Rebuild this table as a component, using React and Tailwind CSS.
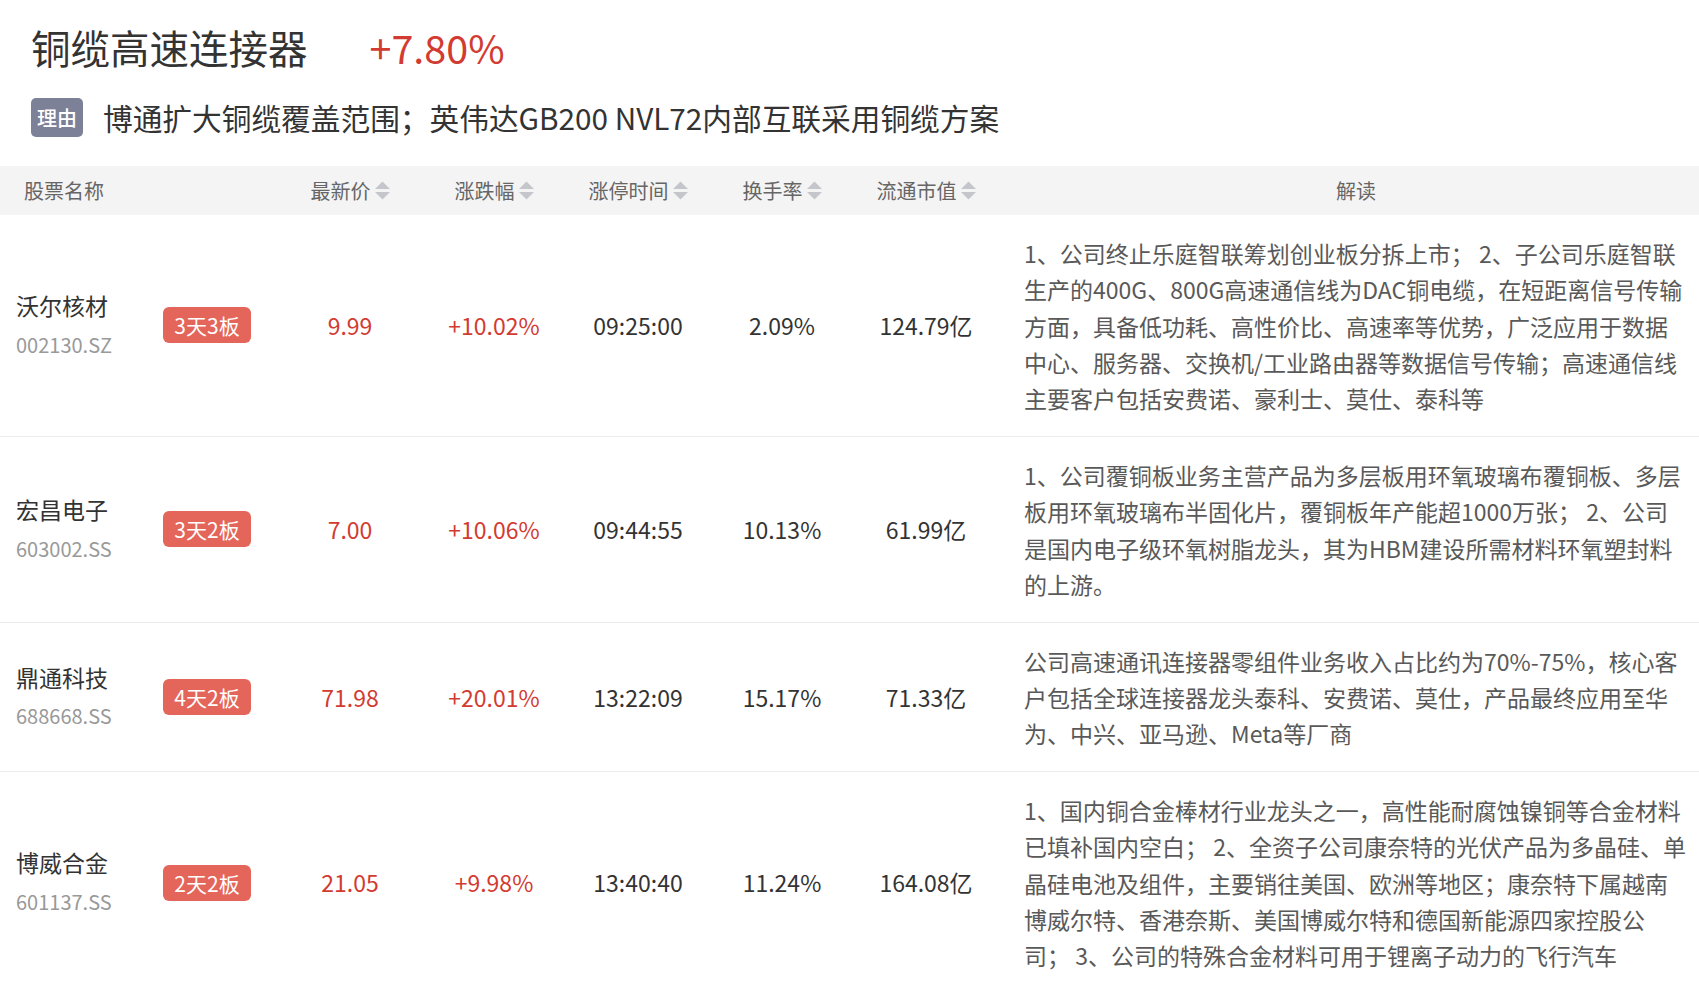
import React from 'react';

const stocks = [
  {
    name: '沃尔核材',
    code: '002130.SZ',
    tag: '3天3板',
    price: '9.99',
    change: '+10.02%',
    time: '09:25:00',
    turnover: '2.09%',
    cap: '124.79亿',
    desc: '1、公司终止乐庭智联筹划创业板分拆上市； 2、子公司乐庭智联生产的400G、800G高速通信线为DAC铜电缆，在短距离信号传输方面，具备低功耗、高性价比、高速率等优势，广泛应用于数据中心、服务器、交换机/工业路由器等数据信号传输；高速通信线主要客户包括安费诺、豪利士、莫仕、泰科等',
  },
  {
    name: '宏昌电子',
    code: '603002.SS',
    tag: '3天2板',
    price: '7.00',
    change: '+10.06%',
    time: '09:44:55',
    turnover: '10.13%',
    cap: '61.99亿',
    desc: '1、公司覆铜板业务主营产品为多层板用环氧玻璃布覆铜板、多层板用环氧玻璃布半固化片，覆铜板年产能超1000万张； 2、公司是国内电子级环氧树脂龙头，其为HBM建设所需材料环氧塑封料的上游。',
  },
  {
    name: '鼎通科技',
    code: '688668.SS',
    tag: '4天2板',
    price: '71.98',
    change: '+20.01%',
    time: '13:22:09',
    turnover: '15.17%',
    cap: '71.33亿',
    desc: '公司高速通讯连接器零组件业务收入占比约为70%-75%，核心客户包括全球连接器龙头泰科、安费诺、莫仕，产品最终应用至华为、中兴、亚马逊、Meta等厂商',
  },
  {
    name: '博威合金',
    code: '601137.SS',
    tag: '2天2板',
    price: '21.05',
    change: '+9.98%',
    time: '13:40:40',
    turnover: '11.24%',
    cap: '164.08亿',
    desc: '1、国内铜合金棒材行业龙头之一，高性能耐腐蚀镍铜等合金材料已填补国内空白； 2、全资子公司康奈特的光伏产品为多晶硅、单晶硅电池及组件，主要销往美国、欧洲等地区；康奈特下属越南博威尔特、香港奈斯、美国博威尔特和德国新能源四家控股公司； 3、公司的特殊合金材料可用于锂离子动力的飞行汽车',
  },
];

// little up/down sort arrows next to header labels
const SortIcon = () => (
  <svg width="15" height="21" viewBox="0 0 15 21" className="ml-[4px] shrink-0">
    <polygon points="0,9 7.5,1.5 15,9" fill="#c4c6cc" />
    <polygon points="0,12 7.5,19.5 15,12" fill="#c4c6cc" />
  </svg>
);

const SortHeader = ({ label }) => (
  <div className="w-[144px] shrink-0 flex items-center justify-center">
    <span>{label}</span>
    <SortIcon />
  </div>
);

const Cell = ({ children, red }) => (
  <div
    className={`w-[144px] shrink-0 flex items-center justify-center ${red ? 'text-[#d23b31]' : 'text-[#333333]'}`}
  >
    {children}
  </div>
);

export default function App() {
  return (
    <div className="w-[1699px] min-h-[985px] bg-white font-['Noto_Sans_CJK_SC',sans-serif] text-[#333333]">
      {/* Title */}
      <div className="px-[31px] pt-[18px] pb-[26px]">
        <div className="flex items-center h-[58px]">
          <h1 className="text-[39.5px] leading-[58px] font-normal text-[#333333]">铜缆高速连接器</h1>
          <span className="ml-[62px] text-[39.5px] leading-[58px] text-[#d23b31]">+7.80%</span>
        </div>
        <div className="mt-[19px] flex items-center h-[45px]">
          <span className="h-[39px] px-[6px] rounded-[5px] bg-[#7c8197] text-white text-[20px] leading-[39px] font-medium">
            理由
          </span>
          <span className="ml-[20px] text-[29.7px] leading-[45px] text-[#333333]">
            博通扩大铜缆覆盖范围；英伟达GB200 NVL72内部互联采用铜缆方案
          </span>
        </div>
      </div>

      {/* Table header */}
      <div className="flex h-[49px] bg-[#f4f4f4] text-[20px] text-[#666666] items-center">
        <div className="w-[278px] shrink-0 pl-[24px]">股票名称</div>
        <SortHeader label="最新价" />
        <SortHeader label="涨跌幅" />
        <SortHeader label="涨停时间" />
        <SortHeader label="换手率" />
        <SortHeader label="流通市值" />
        <div className="flex-1 pl-[26px] pr-[11px] text-center">解读</div>
      </div>

      {/* Rows */}
      {stocks.map((s) => (
        <div key={s.code} className="flex border-b border-[#ececec] text-[23px]">
          <div className="w-[163px] shrink-0 pl-[16px] pb-[3px] flex flex-col justify-center">
            <span className="leading-[34px] text-[#333333]">{s.name}</span>
            <span className="mt-[7.5px] text-[20px] leading-[30px] text-[#999999]">{s.code}</span>
          </div>
          <div className="w-[115px] shrink-0 flex items-center">
            <span className="h-[36px] w-[88px] text-center rounded-[6px] bg-[#e4655a] text-white text-[21px] leading-[36px]">
              {s.tag}
            </span>
          </div>
          <Cell red>{s.price}</Cell>
          <Cell red>{s.change}</Cell>
          <Cell>{s.time}</Cell>
          <Cell>{s.turnover}</Cell>
          <Cell>{s.cap}</Cell>
          <div className="flex-1 pl-[26px] pr-[11px] pt-[20px] pb-[19.5px]">
            <p className="w-[664px] leading-[36.3px] text-[#595959]">{s.desc}</p>
          </div>
        </div>
      ))}
    </div>
  );
}
